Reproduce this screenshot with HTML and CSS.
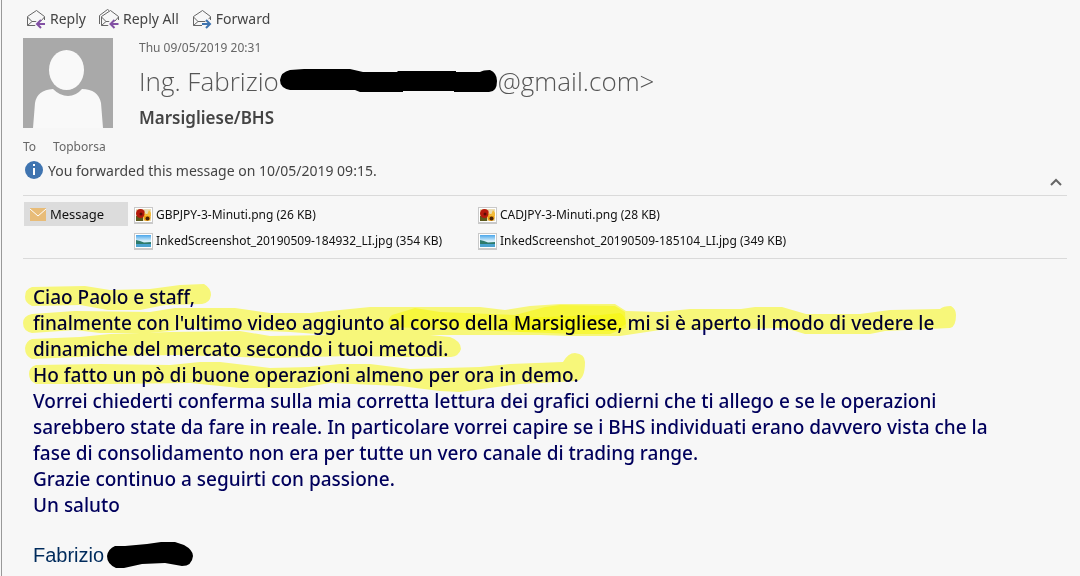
FILE: index.html
```
<!DOCTYPE html>
<html lang="it">

<head>
    <meta charset="utf-8">
    <title>Marsigliese/BHS</title>
    <link rel="stylesheet" href="styles.css">
</head>

<body>

<!-- shapes used more than once -->
<svg class="defs" aria-hidden="true">
    <symbol id="envelope" viewBox="0 0 20 20">
        <path d="M10 16.500H1.500V7.500L10.500 1.500L18.500 7.500V11M1.500 8L6 12.500H14.500L18.500 8M1.500 16.500L6 12.500" fill="none" stroke="#666" />
    </symbol>
    <symbol id="flower" viewBox="0 0 19 17">
        <path d="M0 0H19V17H0Z" fill="#c9c9c9" />
        <path d="M1 1H18V15H1Z" fill="#fff" />
        <path d="M2 2H17V14H2Z" fill="#e9dcb4" />
        <path d="M2 9H9V14H2Z" fill="#5c5a1c" />
        <circle cx="6.500" cy="6.500" r="4.500" fill="#b51a0c" />
        <circle cx="7" cy="7" r="1.500" fill="#5a0d06" />
        <circle cx="13" cy="10.500" r="3.500" fill="#f0a012" />
        <path d="M10 5L13 8L15 3L17 6V9H11Z" fill="#f2bc3a" />
        <circle cx="13.500" cy="11.500" r="2" fill="#4a2408" />
    </symbol>
    <linearGradient id="sky" x2="0" y2="1">
        <stop offset="0" stop-color="#4aa6ea" />
        <stop offset="0.500" stop-color="#d8f0fb" />
    </linearGradient>
    <symbol id="landscape" viewBox="0 0 19 17">
        <path d="M0 0H19V17H0Z" fill="#c9c9c9" />
        <path d="M1 1H18V15H1Z" fill="#fff" />
        <path d="M2 2H17V14H2Z" fill="url(#sky)" />
        <path d="M2 7L6 8L10 9.500L17 9V11H2Z" fill="#2e7b6c" />
        <path d="M2 11H17V14H2Z" fill="#4ba3cf" />
    </symbol>
</svg>

<main class="message">

    <div class="toolbar">
        <button type="button">
            <svg width="20" height="20" viewBox="0 0 20 20"><use href="#envelope" /><path d="M19 15H11M14.500 11L10.500 15L14.500 19" fill="none" stroke="#f7f7f7" stroke-width="4" /><path d="M19 15H11.500M15 11L11 15L15 19" fill="none" stroke="#8250a4" stroke-width="2" /></svg>
            Reply
        </button>
        <button type="button">
            <svg width="20" height="20" viewBox="0 0 20 20"><path d="M0.500 15V6.500L8.500 0.500L10 1.500" fill="none" stroke="#666" /><use href="#envelope" x="1" /><path d="M19 15H11M14.500 11L10.500 15L14.500 19" fill="none" stroke="#f7f7f7" stroke-width="4" /><path d="M19.500 15H12M15.500 11L11.500 15L15.500 19" fill="none" stroke="#8250a4" stroke-width="2" /></svg>
            Reply All
        </button>
        <button type="button">
            <svg width="20" height="20" viewBox="0 0 20 20"><use href="#envelope" /><path d="M10 15H18M14.500 11L18.500 15L14.500 19" fill="none" stroke="#f7f7f7" stroke-width="4" /><path d="M10 15H17.500M14 11L18 15L14 19" fill="none" stroke="#3f74b0" stroke-width="2" /></svg>
            Forward
        </button>
    </div> <!-- toolbar -->

    <header class="head">
        <svg class="avatar" width="90" height="90" viewBox="0 0 90 90">
            <path d="M0 0H90V90H0Z" fill="#a9a9a9" />
            <ellipse cx="43.500" cy="32" rx="17.500" ry="20" fill="#f9f9f9" />
            <path d="M10 90L12 65Q14 52 30 51Q37 58 45 58Q53 58 59 51Q75 51 78 65L80 90Z" fill="#f9f9f9" />
        </svg>
        <div class="head-text">
            <div class="date">Thu 09/05/2019 20:31</div>
            <div class="sender">
                <span>Ing. Fabrizio</span>
                <svg class="redacted" width="217" height="24" viewBox="0 0 217 24"><path d="M10 1L24 0H70L83 3H117L118 2H176V3H200Q203 1 210 1Q217 4 217 12Q217 23 209 23H174V22H123V23H80L75 21H10Q0 19 0 11Q1 3 10 1Z" /></svg>
                <span>@gmail.com&gt;</span>
            </div>
            <h1 class="subject">Marsigliese/BHS</h1>
        </div>
    </header>

    <div class="recipient"><span>To</span><span>Topborsa</span></div>

    <div class="notice">
        <svg width="20" height="20" viewBox="0 0 20 20"><circle cx="10" cy="9" r="9" fill="#3f74b0" /><path d="M9 7H11V14H9ZM9 3H11V5H9Z" fill="#fff" /></svg>
        <span>You forwarded this message on 10/05/2019 09:15.</span>
        <button type="button" class="collapse" aria-label="Collapse header">
            <svg width="12" height="8" viewBox="0 0 12 8"><path d="M1 7L6 2L11 7" fill="none" stroke="#666" stroke-width="2" /></svg>
        </button>
    </div>

    <div class="attachments">
        <button type="button" class="tab">
            <svg width="16" height="13" viewBox="0 0 16 13"><path d="M0 0H16V13H0Z" fill="#e8bc78" /><path d="M0 1L8 8L16 1" fill="none" stroke="#fff" stroke-width="1" /></svg>
            Message
        </button>
        <ul class="files">
            <li><a href="#"><svg width="19" height="17"><use href="#flower" /></svg>GBPJPY-3-Minuti.png (26 KB)</a></li>
            <li><a href="#"><svg width="19" height="17"><use href="#flower" /></svg>CADJPY-3-Minuti.png (28 KB)</a></li>
            <li><a href="#"><svg width="19" height="17"><use href="#landscape" /></svg>InkedScreenshot_20190509-184932_LI.jpg (354 KB)</a></li>
            <li><a href="#"><svg width="19" height="17"><use href="#landscape" /></svg>InkedScreenshot_20190509-185104_LI.jpg (349 KB)</a></li>
        </ul>
    </div> <!-- attachments -->

    <article class="content">
        <p>
            Ciao Paolo e staff,<br>
            finalmente con l'ultimo video aggiunto al corso della Marsigliese, mi si è aperto il modo di vedere le<br>
            dinamiche del mercato secondo i tuoi metodi.<br>
            Ho fatto un pò di buone operazioni almeno per ora in demo.<br>
            Vorrei chiederti conferma sulla mia corretta lettura dei grafici odierni che ti allego e se le operazioni<br>
            sarebbero state da fare in reale. In particolare vorrei capire se i BHS individuati erano davvero vista che la<br>
            fase di consolidamento non era per tutte un vero canale di trading range.<br>
            Grazie continuo a seguirti con passione.<br>
            Un saluto
        </p>

        <!-- marker strokes over the first four lines -->
        <svg class="marker" width="940" height="120" viewBox="20 280 940 120" aria-hidden="true">
            <g fill="#ffff7e">
                <path d="M32 287L85 286L110 290L150 289L180 285L204 284Q211 288 211 295Q210 303 202 304L165 305L140 310H108L80 305L32 306Q25 303 25 297Q25 289 32 287Z" />
                <path d="M32 314L75 311L150 312L175 308H235L270 313H310L350 309L370 307H480L505 310L530 306L560 304H615L626 311L660 312L690 309H741L755 307H782L806 314H860L890 310L940 309Q943 306 951 306Q956 309 956 315Q956 327 950 328L885 331L870 334H805L785 328L700 330H660L620 336H570L540 335H330L290 332L240 330L190 329L150 333H100L75 330L32 333Q23 331 23 323Q23 316 32 314Z" />
                <path d="M32 339L80 337L110 334L170 332L240 331L270 336L330 335L345 332L380 331L430 335L450 337Q461 341 461 349Q459 356 451 357H400L350 356L270 358L180 355L100 356L32 359Q25 356 25 348Q26 341 32 339Z" />
                <path d="M36 365L100 364L170 365L200 362H220L270 368L310 367L340 364H370L410 369L480 367L510 364L563 362Q568 353 575 353Q585 354 585 362Q585 379 577 381L520 384L460 392L440 391L400 386L330 383L300 388H240L190 383L110 384H36Q29 381 29 374Q29 367 36 365Z" />
            </g>
            <path d="M392 315L415 308L440 312L515 315L545 307L560 305L615 306L625 312L626 328L610 334H575L520 332L390 327Q386 320 392 315Z" fill="#ffff80" />
            <path d="M514 318L600 315L620 313Q626 316 626 324L615 331L575 330L520 332Q506 327 514 318Z" fill="#ffff80" />
        </svg>

        <div class="signature">
            <span>Fabrizio</span>
            <svg class="redacted" width="86" height="26" viewBox="0 0 86 26"><path d="M8 4L18 4L40 2L54 0H68L77 3Q86 8 86 14Q85 24 75 24L58 21L35 22L17 26H9Q0 22 0 14Q1 7 8 4Z" /></svg>
        </div>
    </article>

</main>

</body>

</html>
```
FILE: styles.css
```
body {
    background-color: #f7f7f7;
    margin: 0;
    font-family: "Noto Sans", "Open Sans", sans-serif;
    color: #444;
}

.defs {
    position: absolute;
    width: 0;
    height: 0;
}

svg {
    flex: none;
}

button {
    display: flex;
    align-items: center;
    gap: 4px;
    padding: 0;
    border: 0;
    background: none;
    font: inherit;
    color: inherit;
}

.message {
    box-sizing: border-box;
    min-height: 100vh;
    margin-left: 1px;
    border-left: 1px solid #999;
    padding: 8px 13px 0 21px;
    white-space: nowrap;
}

.toolbar {
    display: flex;
    gap: 13px;
    padding-left: 3px;
    font-size: 14px;
    line-height: 22px;
}

.head {
    display: flex;
    gap: 26px;
    margin-top: 8px;
}

.date {
    font-size: 12px;
    line-height: 20px;
    color: #666;
}

.sender {
    display: flex;
    align-items: center;
    gap: 1px;
    font-family: "Open Sans", sans-serif;
    font-size: 26px;
    font-weight: 300;
    line-height: 46px;
    color: #555;
}

.subject {
    margin: 0;
    font-size: 17px;
    font-weight: 600;
    line-height: 28px;
}

.recipient {
    display: flex;
    gap: 17px;
    margin-top: 5px;
    font-size: 12px;
    line-height: 20px;
    color: #666;
}

.notice {
    display: flex;
    align-items: flex-start;
    gap: 4px;
    padding: 4px 5px 9px 1px;
    font-size: 14px;
    line-height: 24px;
}

.notice > span {
    line-height: 20px;
}

.collapse {
    margin-left: auto;
    align-self: flex-end;
    padding-top: 17px;
}

.attachments {
    display: flex;
    align-items: flex-start;
    gap: 6px;
    padding: 6px 0 4px 1px;
    border-top: 1px solid #dadada;
    border-bottom: 1px solid #dadada;
    font-size: 12px;
    line-height: 26px;
    color: #111;
}

.tab {
    width: 104px;
    height: 24px;
    padding-left: 6px;
    background-color: #dcdcdc;
    font-size: 13px;
}

.files {
    display: grid;
    grid-template-columns: 344px 344px;
    margin: 0;
    padding: 0;
    list-style: none;
}

.files a {
    display: flex;
    align-items: center;
    gap: 3px;
    color: inherit;
    text-decoration: none;
}

.content {
    position: relative;
    padding: 25px 0 0 10px;
    font-size: 19px;
    font-weight: 500;
    line-height: 26px;
    color: #00005c;
}

.content p {
    margin: 0;
}

.marker {
    position: absolute;
    top: 21px;
    left: -3px;
    mix-blend-mode: multiply;
}

.marker path {
    mix-blend-mode: multiply;
}

.marker g path {
    mix-blend-mode: normal;
}

.signature {
    display: flex;
    align-items: center;
    gap: 3px;
    margin-top: 24px;
    font-family: "Liberation Sans", Arial, sans-serif;
    font-size: 20px;
    font-weight: 400;
    color: #002b5c;
}
```
